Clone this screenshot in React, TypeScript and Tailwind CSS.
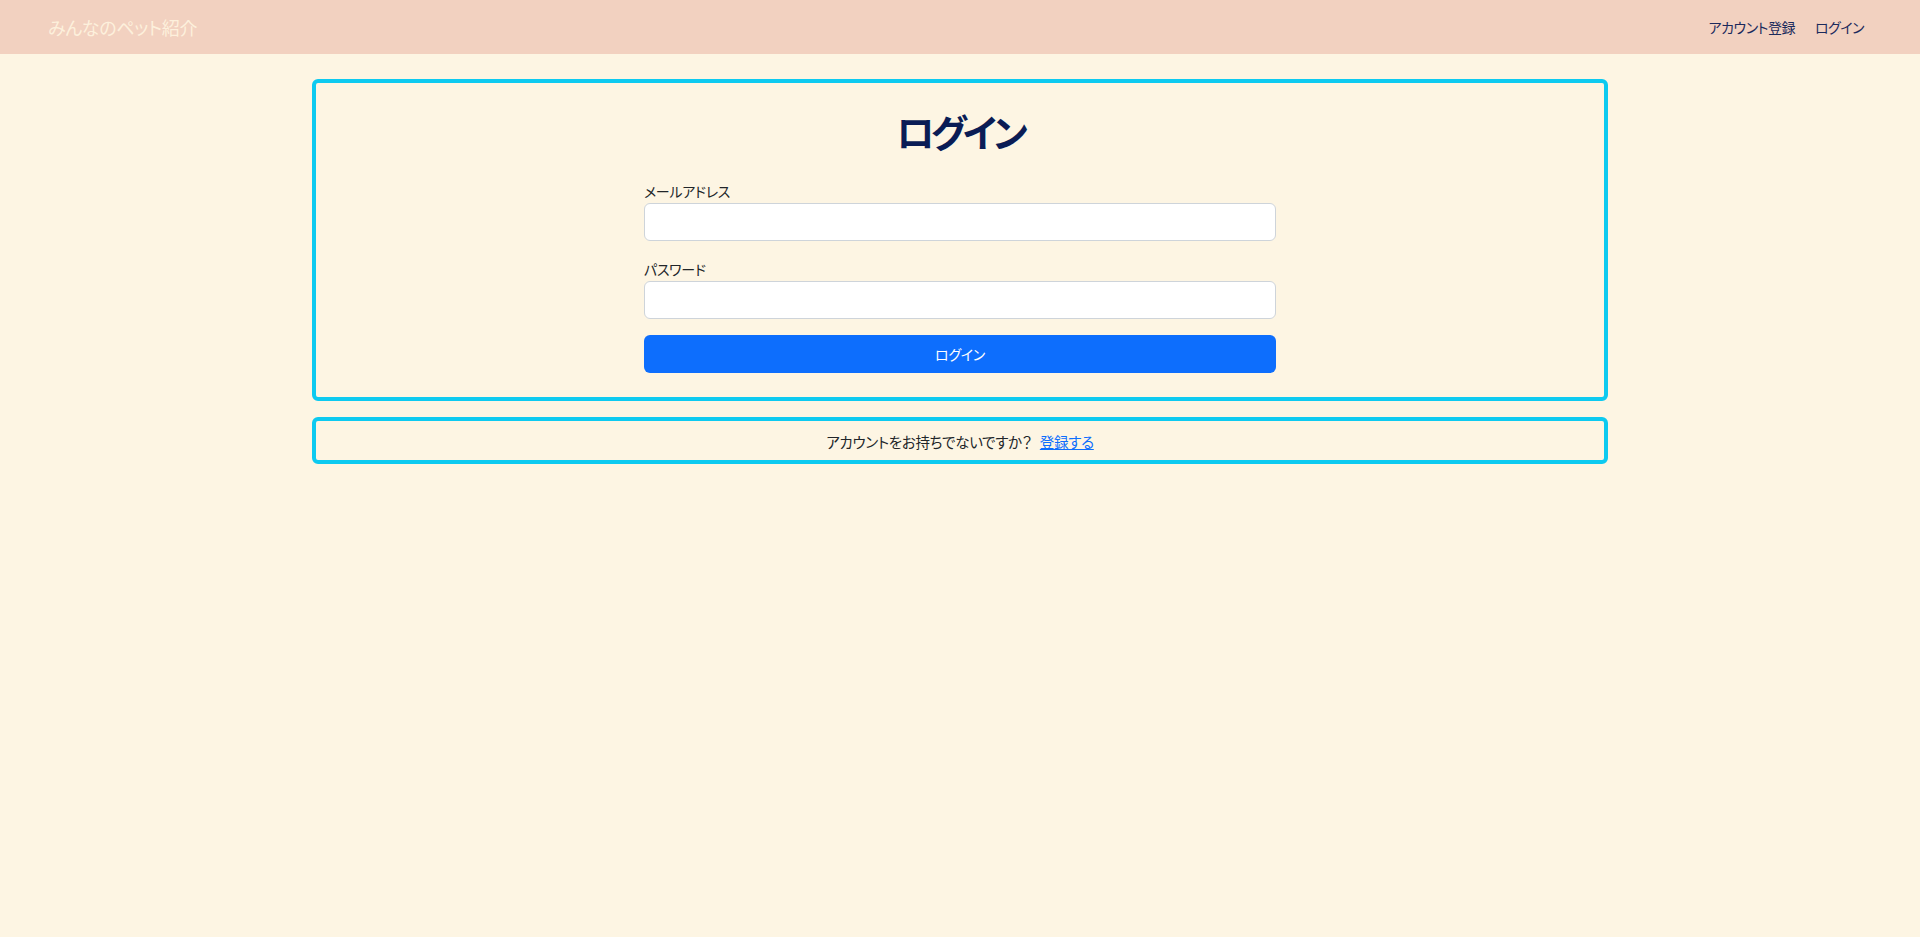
import React from 'react'

const jp = "font-['Noto_Sans_CJK_JP','Noto_Sans',sans-serif] [font-feature-settings:'palt']"

function Navbar() {
  return (
    <nav className="h-[54px] bg-[#f2d1c0] flex items-center justify-between px-12">
      <a className="text-[18px] text-[#fdf0dc] leading-none tracking-[-0.3px]">みんなのペット紹介</a>
      <div className="flex items-center gap-1 text-[14px] text-[#1b2a5c] tracking-[-0.5px]">
        <a className="px-2">アカウント登録</a>
        <a className="px-2">ログイン</a>
      </div>
    </nav>
  )
}

function Field({ label, type }: { label: string; type: string }) {
  return (
    <div className="flex flex-col">
      <label className="h-6 leading-6 text-[14px] tracking-[-0.3px] text-[#212529]">{label}</label>
      <input
        type={type}
        className="h-[38px] bg-white border border-[#ced4da] rounded-[6px] px-3 outline-none"
      />
    </div>
  )
}

export default function App() {
  return (
    <div className={`min-h-[937px] bg-[#fdf5e3] ${jp}`}>
      <Navbar />

      <main className="w-[1296px] mx-auto mt-[25px] flex flex-col gap-4">
        {/* ログインフォーム */}
        <section className="border-4 border-[#0dcaf0] rounded-[6px] pt-6 pb-6">
          <h1 className="text-center text-[38px] leading-[48px] font-bold tracking-[-4px] text-[#0a1c55] mb-6">ログイン</h1>
          <form className="w-[632px] mx-auto flex flex-col gap-4" onSubmit={(e) => e.preventDefault()}>
            <Field label="メールアドレス" type="email" />
            <Field label="パスワード" type="password" />
            <button className="h-[38px] bg-[#0d6efd] text-white text-[14px] tracking-[-0.3px] rounded-[6px]">ログイン</button>
          </form>
        </section>

        {/* 登録リンク */}
        <section className="border-4 border-[#0dcaf0] rounded-[6px] h-[47px] flex items-center justify-center text-[14.5px] tracking-[-0.3px] text-[#212529]">
          <span className="pt-[2px]">アカウントをお持ちでないですか？</span>
          <a className="ml-2 pt-[2px] text-[#0d6efd] underline">登録する</a>
        </section>
      </main>
    </div>
  )
}
